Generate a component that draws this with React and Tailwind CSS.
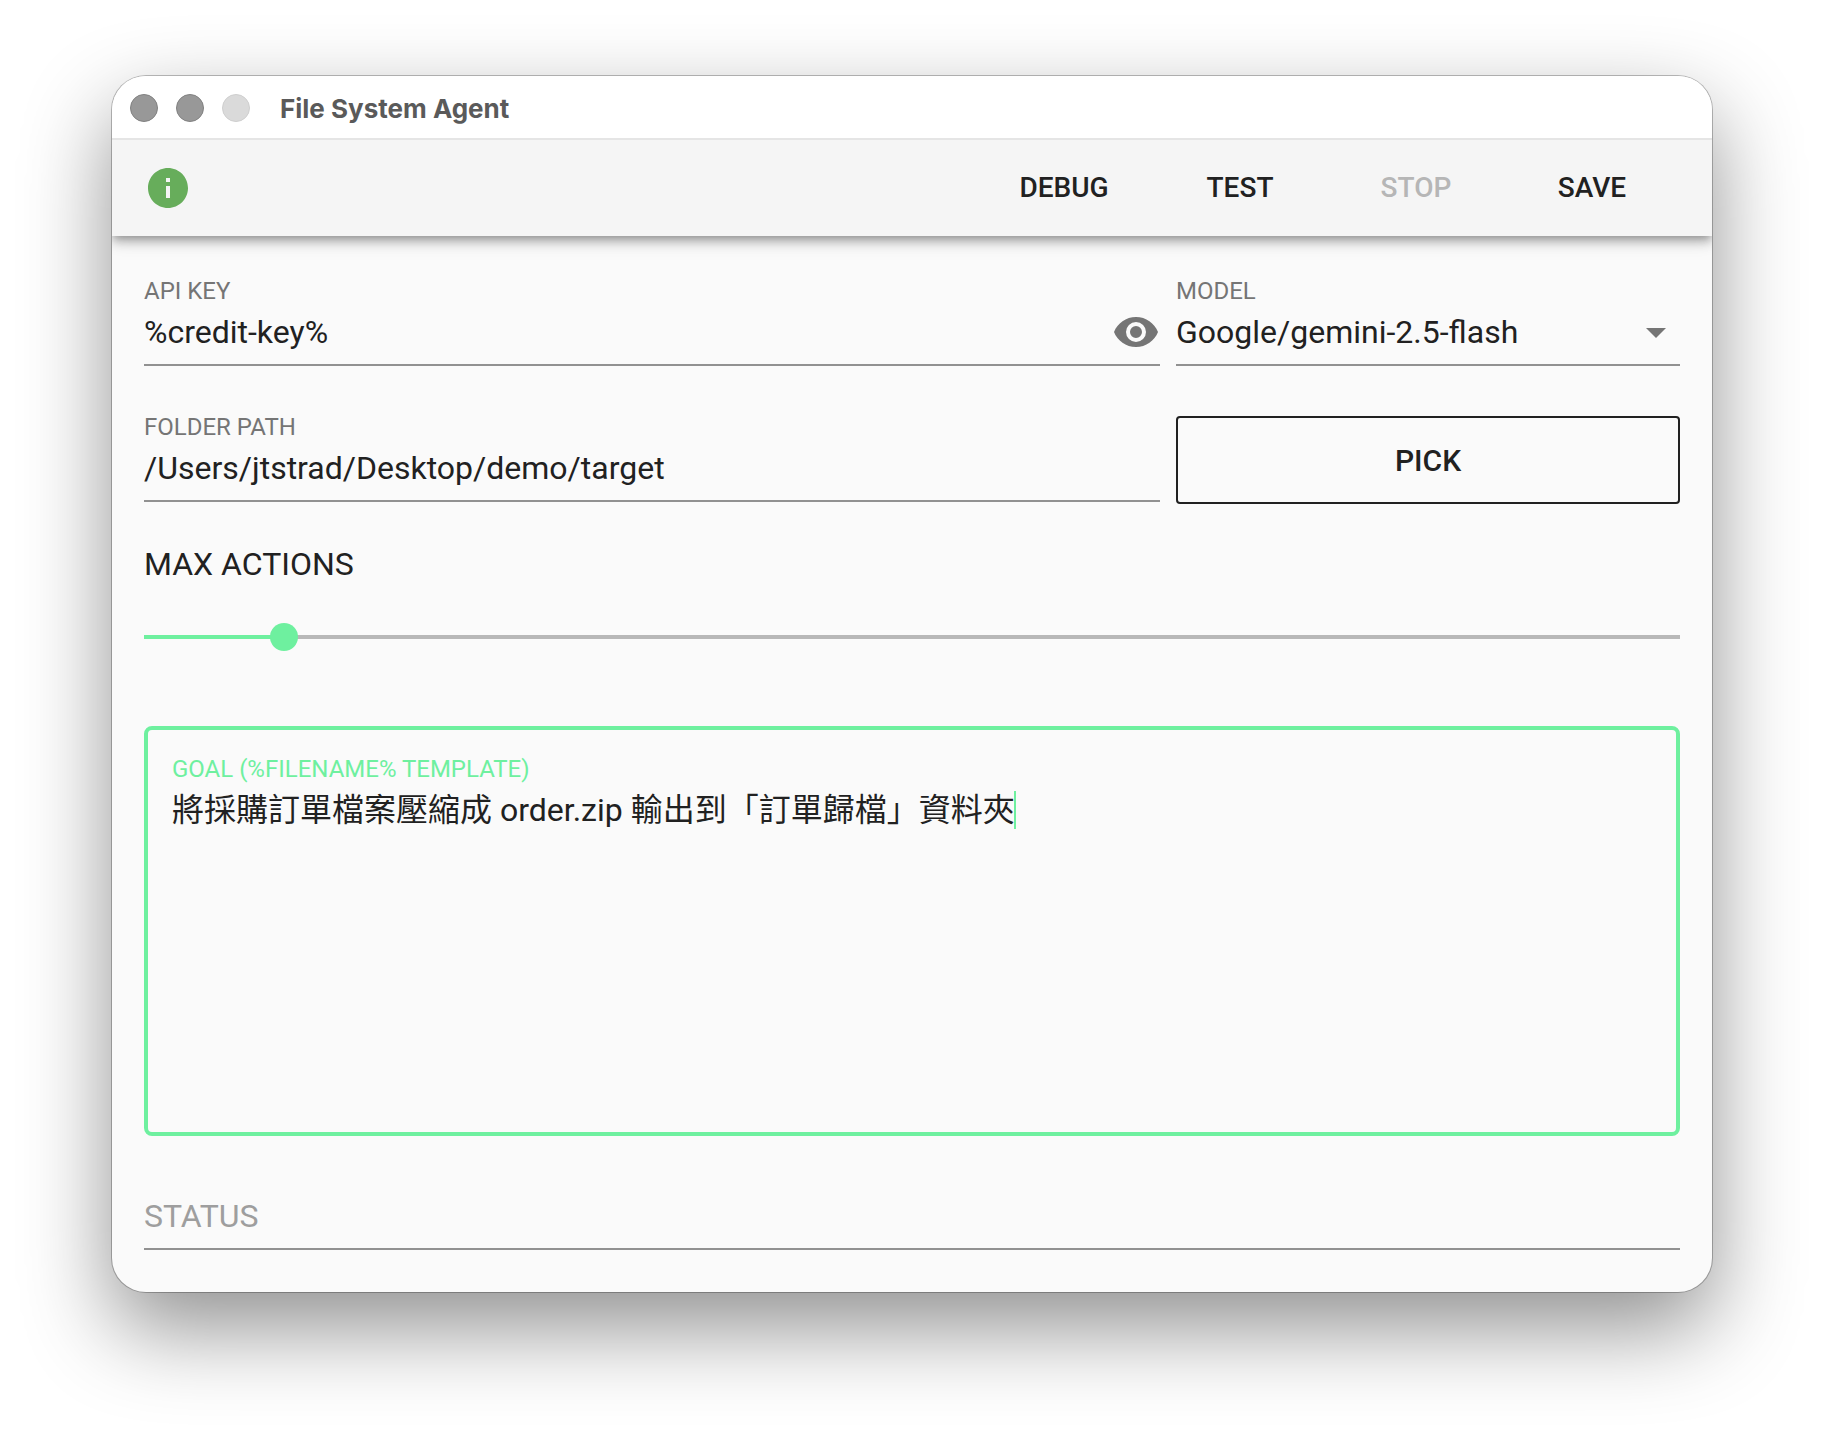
import React, { useState } from 'react';

const UI_FONT = "font-['Roboto','Noto_Sans_CJK_TC',sans-serif]";

const MODELS = ['Google/gemini-2.5-flash', 'Google/gemini-2.5-pro'];

const ACTIONS = [
  { label: 'DEBUG' },
  { label: 'TEST' },
  { label: 'STOP', disabled: true },
  { label: 'SAVE' },
];

const Icon = ({ path, className }) => (
  <svg viewBox="0 0 24 24" className={`w-12 h-12 shrink-0 fill-current ${className}`} aria-hidden="true">
    <path d={path} />
  </svg>
);

const ICONS = {
  info: 'M12 2C6.48 2 2 6.48 2 12s4.48 10 10 10 10-4.48 10-10S17.52 2 12 2zm1 15h-2v-6h2v6zm0-8h-2V7h2v2z',
  eye: 'M12 9a3 3 0 0 0-3 3 3 3 0 0 0 3 3 3 3 0 0 0 3-3 3 3 0 0 0-3-3m0 8a5 5 0 0 1-5-5 5 5 0 0 1 5-5 5 5 0 0 1 5 5 5 5 0 0 1-5 5m0-12.5C7 4.5 2.73 7.61 1 12c1.73 4.39 6 7.5 11 7.5s9.27-3.11 11-7.5c-1.73-4.39-6-7.5-11-7.5z',
  menuDown: 'M7 10l5 5 5-5H7z',
};

// Underlined field; `label` stays empty when the placeholder is used instead
const Field = ({ id, label, children }) => (
  <div className="border-b-2 border-[#919191] pb-[6px]">
    <label htmlFor={id} className="block h-[30px] text-2xl leading-[30px] text-[#757575]">{label}</label>
    <div className="flex items-center h-[52px]">{children}</div>
  </div>
);

const TitleBar = () => (
  <header className="relative z-10 flex items-center h-16 pt-0.5 px-[18px] bg-white border-b-2 border-[#e5e5e5]">
    <div className="flex gap-[18px]">
      <span className="w-7 h-7 rounded-full bg-[#989898] border border-[#808080]" />
      <span className="w-7 h-7 rounded-full bg-[#989898] border border-[#808080]" />
      <span className="w-7 h-7 rounded-full bg-[#dadada] border border-[#cecece]" />
    </div>
    <h1 className="ml-[30px] pt-0.5 font-['Inter',sans-serif] text-[26px] leading-8 font-bold text-[#5a5a5a]">
      File System Agent
    </h1>
  </header>
);

const Toolbar = () => (
  <div className="relative flex items-center h-24 px-8 bg-[#f5f5f5] shadow-[0_4px_8px_-2px_rgba(0,0,0,0.28),0_8px_10px_0_rgba(0,0,0,0.14),0_2px_20px_0_rgba(0,0,0,0.12)]">
    <button type="button" aria-label="Info">
      <Icon path={ICONS.info} className="text-[#67ad5b]" />
    </button>
    <div className="flex ml-auto">
      {ACTIONS.map(({ label, disabled }) => (
        <button
          key={label}
          type="button"
          disabled={disabled}
          className="w-44 h-24 text-[28px] font-medium text-[#212121] disabled:text-[#b6b6b6]"
        >
          {label}
        </button>
      ))}
    </div>
  </div>
);

const MaxActions = () => {
  const [value, setValue] = useState(10);
  const pct = ((value - 1) / 99) * 100;

  return (
    <div className="mt-10">
      <label htmlFor="max-actions" className="block text-[32px] leading-10">MAX ACTIONS</label>
      {/* half a thumb of overhang on each side, so the thumb centre runs edge to edge */}
      <div className="mt-9 -mx-3.5">
        <input
          id="max-actions"
          type="range"
          min="1"
          max="100"
          value={value}
          onChange={(e) => setValue(Number(e.target.value))}
          className="block w-full h-[34px] appearance-none bg-[length:calc(100%-28px)_4px] bg-center bg-no-repeat outline-none [&::-webkit-slider-thumb]:appearance-none [&::-webkit-slider-thumb]:w-7 [&::-webkit-slider-thumb]:h-7 [&::-webkit-slider-thumb]:rounded-full [&::-webkit-slider-thumb]:bg-[#6ef09f]"
          style={{ backgroundImage: `linear-gradient(to right, #6ef09f ${pct}%, #b8b8b8 ${pct}%)` }}
        />
      </div>
    </div>
  );
};

const Goal = () => {
  const [goal, setGoal] = useState('將採購訂單檔案壓縮成 order.zip 輸出到「訂單歸檔」資料夾');

  return (
    <div className="relative mt-[72px] px-6 pt-6 border-4 border-[#6ef09f] rounded-lg">
      <label htmlFor="goal" className="block text-2xl leading-[30px] text-[#6ef09f]">
        GOAL (%FILENAME% TEMPLATE)
      </label>
      <textarea
        id="goal"
        value={goal}
        onChange={(e) => setGoal(e.target.value)}
        className="block w-full h-[348px] resize-none bg-transparent text-[32px] leading-[52px] caret-[#6ef09f] outline-none"
      />
      <span className="absolute left-[866px] top-[61px] w-0.5 h-[38px] bg-[#6ef09f]" aria-hidden="true" />
    </div>
  );
};

const App = () => {
  const [apiKey, setApiKey] = useState('%credit-key%');
  const [folder, setFolder] = useState('/Users/jtstrad/Desktop/demo/target');
  const [model, setModel] = useState(MODELS[0]);

  return (
    <div className={`min-h-screen px-28 pt-[76px] pb-[148px] bg-white text-[#212121] ${UI_FONT}`}>
      <main className="overflow-hidden rounded-[34px] bg-[#fafafa] shadow-[0_0_0_1px_rgba(0,0,0,0.25),0_36px_88px_0_rgba(0,0,0,0.44)]">
        <TitleBar />
        <Toolbar />
        <form className="px-8 pt-10 pb-[42px]" onSubmit={(e) => e.preventDefault()}>
          <div className="grid grid-cols-[127fr_63fr] gap-x-4 gap-y-[46px] items-start">
            <Field id="api-key" label="API KEY">
              <input
                id="api-key"
                type="text"
                value={apiKey}
                onChange={(e) => setApiKey(e.target.value)}
                className="flex-1 min-w-0 h-full bg-transparent text-[32px] outline-none"
              />
              <button type="button" aria-label="Show key">
                <Icon path={ICONS.eye} className="text-[#757575]" />
              </button>
            </Field>
            <Field id="model" label="MODEL">
              <select
                id="model"
                value={model}
                onChange={(e) => setModel(e.target.value)}
                className="flex-1 min-w-0 h-full appearance-none bg-transparent text-[32px] outline-none"
              >
                {MODELS.map((m) => <option key={m}>{m}</option>)}
              </select>
              <Icon path={ICONS.menuDown} className="text-[#757575]" />
            </Field>
            <Field id="folder" label="FOLDER PATH">
              <input
                id="folder"
                type="text"
                value={folder}
                onChange={(e) => setFolder(e.target.value)}
                className="flex-1 min-w-0 h-full bg-transparent text-[32px] outline-none"
              />
            </Field>
            <button
              type="button"
              className="mt-1 h-[88px] border-2 border-[#212121] rounded text-[30px] font-medium"
            >
              PICK
            </button>
          </div>
          <MaxActions />
          <Goal />
          <div className="mt-6">
            <Field id="status">
              <input
                id="status"
                type="text"
                readOnly
                aria-label="Status"
                placeholder="STATUS"
                className="flex-1 min-w-0 h-full bg-transparent text-[32px] placeholder:text-[#9e9e9e] outline-none"
              />
            </Field>
          </div>
        </form>
      </main>
    </div>
  );
};

export default App;
